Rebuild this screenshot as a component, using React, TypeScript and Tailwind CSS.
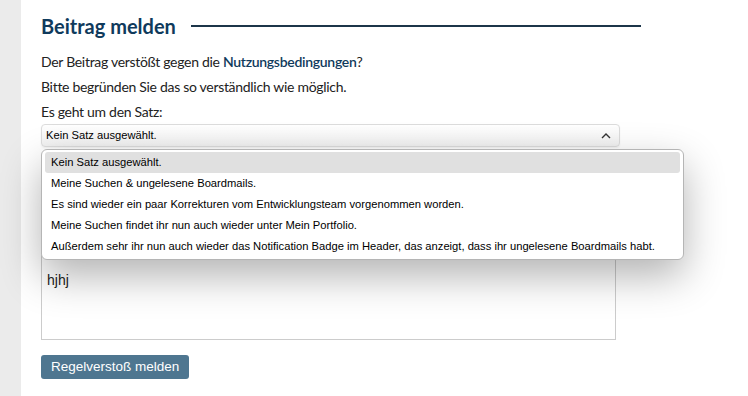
import React from 'react';

const options = [
  'Kein Satz ausgewählt.',
  'Meine Suchen & ungelesene Boardmails.',
  'Es sind wieder ein paar Korrekturen vom Entwicklungsteam vorgenommen worden.',
  'Meine Suchen findet ihr nun auch wieder unter Mein Portfolio.',
  'Außerdem sehr ihr nun auch wieder das Notification Badge im Header, das anzeigt, dass ihr ungelesene Boardmails habt.',
];

const ui = { fontFamily: 'Tahoma, "Liberation Sans", Arial, sans-serif' };
const body = { fontFamily: '"Source Sans Pro", Lato, "Open Sans", sans-serif' };

const App: React.FC = () => {
  return (
    <div className="flex min-h-[396px] bg-white text-[#222]" style={body}>
      {/* left rail */}
      <div className="w-[21px] shrink-0 bg-[#ebebeb]" />

      <main className="flex-1 pl-5 pt-[12px]">
        {/* heading */}
        <div className="flex w-[600px] items-center gap-[15px]">
          <h2 className="text-[20px] font-bold leading-[28px] text-[#0f3a5c]">Beitrag melden</h2>
          <div className="h-[1.5px] flex-1 bg-[#1c3549]" />
        </div>

        <div className="mt-[9px] text-[14px] leading-[25px] tracking-[-0.3px]">
          <p>
            Der Beitrag verstößt gegen die{' '}
            <a className="font-semibold text-[#0f3a5c]">Nutzungsbedingungen</a>?
          </p>
          <p>Bitte begründen Sie das so verständlich wie möglich.</p>
          <p>Es geht um den Satz:</p>
        </div>

        <div className="relative w-[579px]">
          {/* select */}
          <div
            className="flex h-[23px] items-center justify-between rounded-[4px] border border-[#dcdcdc] bg-gradient-to-b from-white to-[#f1f1f1] pl-[4px] pr-[8px] text-[11.2px] text-black shadow-[0_1px_2px_rgba(0,0,0,0.06)]"
            style={ui}
          >
            <span>Kein Satz ausgewählt.</span>
            <svg width="10" height="6" viewBox="0 0 10 6" fill="none">
              <path d="M1 5 L5 1 L9 5" stroke="#333" strokeWidth="1.4" />
            </svg>
          </div>

          {/* open list */}
          <div
            className="absolute left-0 top-[25px] z-10 w-[643px] rounded-[6px] border border-[#b5b5b5] bg-white px-[3px] pb-[2px] pt-[2px] text-[11.2px] text-black shadow-[0_16px_40px_rgba(0,0,0,0.3)]"
            style={ui}
          >
            {options.map((o, i) => (
              <div
                key={o}
                className={`flex h-[21px] items-center rounded-[3px] px-[6px] ${i === 0 ? 'bg-[#e0e0e0]' : ''}`}
              >
                {o}
              </div>
            ))}
          </div>

          {/* textarea */}
          <div
            className="mt-[108px] h-[85px] w-[575px] border border-[#cccccc] bg-white px-[5px] pt-[14px] text-[14px]"
            style={ui}
          >
            hjhj
          </div>
        </div>

        <button
          className="mt-[15px] h-[24px] rounded-[3px] bg-[#4e7690] px-[10px] text-[13.5px] text-white"
          style={ui}
        >
          Regelverstoß melden
        </button>
      </main>
    </div>
  );
};

export default App;
